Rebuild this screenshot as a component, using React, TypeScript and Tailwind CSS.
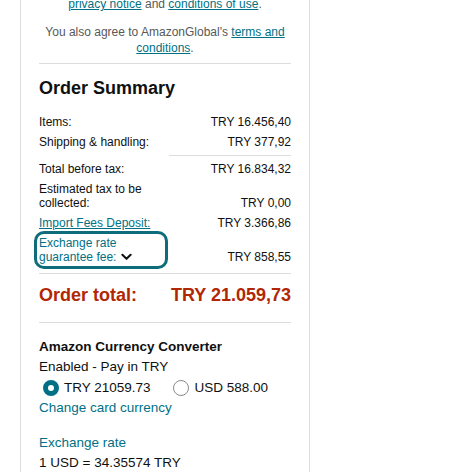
import React from 'react';

const Row = ({ label, value, className = '' }: { label: React.ReactNode; value: string; className?: string }) => (
  <div className={`flex items-end justify-between ${className}`}>
    <div className="w-[124px]">{label}</div>
    <div className="text-right">{value}</div>
  </div>
);

const Radio = ({ checked }: { checked?: boolean }) =>
  checked ? (
    <span className="inline-block h-[16px] w-[16px] rounded-full border-[5px] border-[#007185] bg-white" />
  ) : (
    <span className="inline-block h-[16px] w-[16px] rounded-full border border-[#888c8c] bg-white" />
  );

const App = () => {
  return (
    <div className="h-[472px] overflow-hidden bg-white font-['Liberation_Sans',Arial,sans-serif] text-[#0f1111]">
      <div className="ml-[20px] h-[520px] w-[290px] border-x border-[#dddddd] px-[18px]">
        <p className="-mt-[4px] text-center text-[12px] leading-[16px] text-[#565959]">
          <a href="#" className="text-[#007185] underline">privacy notice</a> and{' '}
          <a href="#" className="text-[#007185] underline">conditions of use</a>.
        </p>
        <p className="mt-[12px] text-center text-[12px] leading-[16px] text-[#565959]">
          You also agree to AmazonGlobal's{' '}
          <a href="#" className="text-[#007185] underline">terms and</a>
          <br />
          <a href="#" className="text-[#007185] underline">conditions</a>.
        </p>

        <div className="mt-[7px] h-px bg-[#dddddd]" />

        <h2 className="mt-[12px] text-[18px] font-bold leading-[24px]">Order Summary</h2>

        <div className="mt-[15px] text-[12px] leading-[14px]">
          <Row label="Items:" value="TRY 16.456,40" className="mb-[6px]" />
          <Row label="Shipping & handling:" value="TRY 377,92" className="mb-[6px]" />
          <div className="mb-[6px] ml-auto h-px w-[122px] bg-[#dddddd]" />
          <Row label="Total before tax:" value="TRY 16.834,32" className="mb-[6px]" />
          <Row label={<>Estimated tax to be collected:</>} value="TRY 0,00" className="mb-[6px]" />
          <Row
            label={<a href="#" className="text-[#007185] underline">Import Fees Deposit:</a>}
            value="TRY 3.366,86"
            className="mb-[6px]"
          />
          <div className="flex items-end justify-between">
            <div className="w-[124px] rounded-[5px] text-[#007185] outline-3 outline-offset-2 outline-solid outline-[#0d6d7a]">
              Exchange rate guarantee fee:
              <svg viewBox="0 0 12 8" className="ml-[5px] inline-block h-[8px] w-[11px] align-[0px]">
                <path d="M1.5 1.5 L6 6 L10.5 1.5" fill="none" stroke="#0f1111" strokeWidth="2.2" strokeLinecap="round" strokeLinejoin="round" />
              </svg>
            </div>
            <div className="text-right">TRY 858,55</div>
          </div>
        </div>

        <div className="mt-[9px] h-px bg-[#dddddd]" />

        <div className="mt-[9px] flex justify-between text-[18px] font-bold leading-[24px] text-[#b12704]">
          <span>Order total:</span>
          <span>TRY 21.059,73</span>
        </div>

        <div className="mt-[15px] h-px bg-[#dddddd]" />

        <div className="mt-[14px] text-[13.5px] leading-[20px]">
          <div className="font-bold">Amazon Currency Converter</div>
          <div>Enabled - Pay in TRY</div>
          <div className="flex h-[21px] items-center pl-[4px]">
            <Radio checked />
            <span className="ml-[5px]">TRY 21059.73</span>
            <span className="ml-[22px] flex items-center">
              <Radio />
              <span className="ml-[6px]">USD 588.00</span>
            </span>
          </div>
          <a href="#" className="block text-[#007185]">Change card currency</a>
          <div className="mt-[15px] text-[#007185]">Exchange rate</div>
          <div>1 USD = 34.35574 TRY</div>
        </div>
      </div>
    </div>
  );
};

export default App;
